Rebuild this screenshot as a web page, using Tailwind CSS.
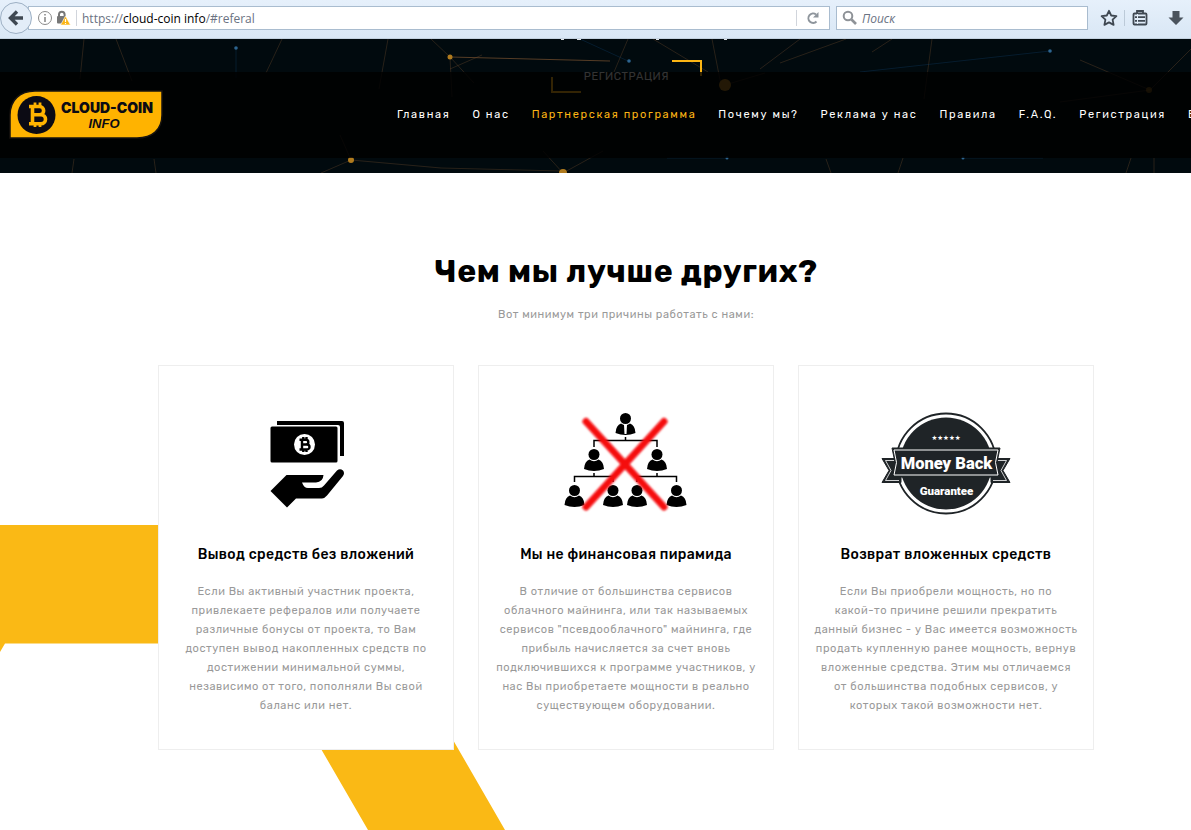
<!DOCTYPE html>
<html lang="ru">
<head>
    <meta charset="UTF-8">
    <meta name="viewport" content="width=device-width, initial-scale=1.0">
    <title>Cloud-Coin Info</title>
    <script src="https://cdn.jsdelivr.net/npm/@tailwindcss/browser@4"></script>
</head>
<body class="min-h-screen flex flex-col overflow-x-hidden bg-white font-['Rubik','Roboto',sans-serif]">
    <!-- Browser toolbar -->
    <div class="h-[39px] shrink-0 flex items-center pb-[2px] pr-[6px] bg-linear-to-b from-[#e6f0fb] to-[#d9e7f5] border-b border-[#c3d1df] font-['Open_Sans',sans-serif] text-xs text-gray-500">
        <button type="button" aria-label="Назад" class="relative z-10 size-8 shrink-0 flex items-center justify-center rounded-full border border-[#9db0c4] bg-[#e3edf8]">
            <svg class="size-4" viewBox="0 0 16 16" fill="none" stroke="#3f4852" stroke-width="3.400"><path d="M15 8H3M9 1.500L2.500 8L9 14.500"/></svg>
        </button>
        <div class="-ml-1 h-6 flex-1 min-w-0 flex items-center border border-[#a9bccf] bg-white">
            <svg class="ml-2 size-4 shrink-0" viewBox="0 0 16 16" fill="none" stroke="#8a8a8a"><circle cx="8" cy="8" r="6.500"/><path stroke-width="1.600" d="M8 7v5M8 4v1.600"/></svg>
            <svg class="ml-[2px] size-4 shrink-0" viewBox="0 0 16 16"><path d="M4 7V4.500a2.800 2.800 0 0 1 5.600 0V7" fill="none" stroke="#777" stroke-width="2"/><rect x="2" y="6" width="9" height="7.500" rx="1" fill="#777"/><path d="M10.500 6L15.500 15H5.500z" fill="#fcb514" stroke="#fff" stroke-width=".6"/><path d="M10.500 9v3M10.500 13v1" stroke="#fff" stroke-width="1.200"/></svg>
            <span class="mx-[5px] w-px h-4 bg-gray-300"></span>
            <div role="textbox" aria-label="Адрес" contenteditable="true" class="flex-1 pt-[2px] outline-none whitespace-nowrap">https://<span class="text-black">cloud-coin info</span>/#referal</div>
            <span class="w-px h-4 bg-gray-300"></span>
            <button type="button" aria-label="Обновить" class="w-8 h-full flex items-center justify-center">
                <svg class="size-[14px]" viewBox="0 0 14 14" fill="none" stroke="#8e959c" stroke-width="2"><path d="M10.500 10.500A4.700 4.700 0 1 1 10 3.500"/><path d="M12.500 1v5.500H7z" fill="#8e959c" stroke="none"/></svg>
            </button>
        </div>
        <label class="ml-[6px] h-6 w-[252px] shrink-0 flex items-center border border-[#a9bccf] bg-white">
            <svg class="ml-[5px] size-4 shrink-0" viewBox="0 0 16 16" fill="none" stroke="#8e9297" stroke-width="2"><circle cx="6" cy="6" r="4.300"/><path stroke-width="2.600" d="M9.500 9.500L14 14"/></svg>
            <input type="search" aria-label="Поиск" placeholder="Поиск" class="ml-1 pt-[2px] min-w-0 flex-1 outline-none italic placeholder:text-gray-500">
        </label>
        <button type="button" aria-label="Закладки" class="ml-3 shrink-0"><svg class="size-[18px]" viewBox="0 0 18 18" fill="none" stroke="#3f4852" stroke-width="1.800" stroke-linejoin="round"><path d="M9 1.800l2.200 4.700 5.200.7-3.800 3.500 1 5.200L9 13.400l-4.600 2.500 1-5.200L1.600 7.200l5.200-.7z"/></svg></button>
        <span class="ml-[6px] w-px h-4 shrink-0 bg-[#bccad8]"></span>
        <button type="button" aria-label="Список" class="ml-[6px] shrink-0"><svg class="size-[18px]" viewBox="0 0 18 18" fill="none" stroke="#3f4852" stroke-width="1.800"><rect x="2.500" y="4.500" width="13" height="11" rx="1"/><path d="M6 4V2h6v2M4 8.200h10M4 11.800h10"/><path d="M6.500 5v10" stroke="#e3edf8" stroke-width="1"/></svg></button>
        <button type="button" aria-label="Загрузки" class="ml-[18px] shrink-0"><svg class="size-[18px]" viewBox="0 0 18 18" fill="#4a535d"><path d="M5.500 2h7v6.500H16.500L9 16 1.500 8.500h4z"/></svg></button>
    </div>

    <!-- Hero -->
    <header class="relative h-[134px] shrink-0 overflow-hidden bg-[#010a0e]">
        <svg class="absolute inset-0 w-full h-full" viewBox="0 0 1191 134" preserveAspectRatio="xMinYMin slice" fill="none">
            <g stroke="#7a5230" stroke-opacity=".33">
                <path d="M84 0l-4 40M116 0l16 42M282 0l-16 34M388 0l-9 50M431 0l19 18 2 40M450 18l24 26M450 30l32-14M628 0l-14 33M653 0l55 33M712 0l9 46M780 24L846 0M872 13l20-13M932 0l-8 60M760 30l40-30M1150 51l-70-30M1150 51l41-41M1060 63l90-12M725 46l40-12M351 121l-11-25M351 121l-30 13M563 134l-20-22M563 134l40-22M826 120l5 14M903 119l-5 15M1131 119l-5 15M1154 119v15M74 120l-2 14M154 120l2 14"/>
                <path stroke-opacity=".7" d="M450 18l160 4"/>
                <path d="M351 121l90 8l120 3"/>
            </g>
            <path stroke="#12406a" stroke-opacity=".35" d="M1050 12L860 33M236 9v30M580 0l48 22M727 119l-60 0M963 119l80 0"/>
            <g fill="#b07b1e"><circle cx="450" cy="18" r="2.500"/><circle cx="725" cy="46" r="6"/><circle cx="351" cy="121" r="3"/><circle cx="563" cy="134" r="4"/><circle cx="1149" cy="51" r="3" fill-opacity=".6"/></g>
            <g fill="#2d6590"><circle cx="236" cy="9" r="1.800"/><circle cx="629" cy="22" r="1.800"/><circle cx="1050" cy="12" r="1.800"/><circle cx="727" cy="119" r="1.500"/><circle cx="963" cy="119" r="1.500"/></g>
            <path stroke="#dfe3e6" d="M561 .5h3M577 .5h4M656 .5h3M724 .5h3"/>
        </svg>
        <a href="#register" class="absolute top-[21px] left-[551px] w-[151px] h-[33px] flex items-center justify-center text-[11px] leading-none tracking-wider text-white">
            РЕГИСТРАЦИЯ
            <span class="absolute top-0 right-0 w-[30px] h-4 border-t-2 border-r-2 border-[#fcb514]"></span>
            <span class="absolute bottom-0 left-0 w-[30px] h-4 border-b-2 border-l-2 border-[#fcb514]"></span>
        </a>

        <!-- Menu bar -->
        <div class="relative mt-[33px] h-[86px] flex items-center bg-black/80">
            <a href="#top" aria-label="Cloud-Coin Info" class="w-[397px] shrink-0 pl-2">
                <svg class="w-[156px] h-[54px]" viewBox="0 0 156 54">
                    <path d="M2 50V27C2 12 12 3 27 3H154V27C154 42 144 50 129 50z" fill="#ffb300" stroke="#17130f" stroke-width="1.500"/>
                    <circle cx="28.500" cy="27" r="19" fill="#0c0b14"/>
                    <g fill="none" stroke="#ffb300" stroke-width="3.600"><path d="M21 18.500h10.500a4 4 0 0 1 0 8.300H24.500M24.500 26.800H33a4.500 4.500 0 0 1 0 9H21M24.500 18.500v17.300"/><path stroke-width="2.800" d="M27 14.500v4M32 14.500v4M27 35v4M32 35v4"/></g>
                    <text x="99" y="25" text-anchor="middle" font-family="Inter, sans-serif" font-weight="900" font-size="14" fill="#0c0b14">CLOUD-COIN</text>
                    <text x="96" y="40" text-anchor="middle" font-family="Liberation Sans, sans-serif" font-style="italic" font-weight="700" font-size="13" fill="#0c0b14">INFO</text>
                </svg>
            </a>
            <nav class="flex gap-[22px] text-[11px] leading-4 tracking-[0.15em] whitespace-nowrap text-white">
                <a href="#home">Главная</a>
                <a href="#about">О нас</a>
                <a href="#referal" class="text-[#fcb514]">Партнерская программа</a>
                <a href="#why">Почему мы?</a>
                <a href="#ads">Реклама у нас</a>
                <a href="#rules">Правила</a>
                <a href="#faq">F.A.Q.</a>
                <a href="#register">Регистрация</a>
                <a href="#login">Вход</a>
            </nav>
        </div>
    </header>

    <!-- Advantages -->
    <main class="relative flex-1 overflow-hidden pt-[78px] pl-[158px] pr-[97px] text-center">
        <svg class="absolute top-0 left-0 w-[505px] h-[657px]" viewBox="0 0 505 657"><path fill="#fab915" d="M0 352H329L505 657H368L260 470.500H5L0 479z"/></svg>

        <h1 class="text-[32px] leading-10 font-bold tracking-[0.02em] text-black">Чем мы лучше других?</h1>
        <p class="mt-[14px] text-[11px] leading-[19px] tracking-wider text-[#999]">Вот минимум три причины работать с нами:</p>

        <div class="relative mt-[41px] grid grid-cols-3 gap-6">
            <section class="h-[385px] pt-[34px] border border-[#eee] bg-white">
                <svg class="mx-auto w-[110px] h-[120px]" viewBox="0 0 110 120">
                    <path d="M26 21H91q2 0 2 2V56H89V27q0-2-2-2H26z"/>
                    <rect x="19.500" y="26.500" width="67" height="36" rx="1.500"/>
                    <circle cx="53.500" cy="44.500" r="10.500" fill="#fff"/>
                    <path fill="none" stroke="#000" stroke-width="2.400" d="M48.500 39.800h6.500a2.300 2.300 0 0 1 0 4.700H51M51 44.500h5a2.500 2.500 0 0 1 0 5H48.500M51 39.800v9.700M52.300 37v3M55.500 37v3M52.300 49v3M55.500 49v3"/>
                    <path d="M19.500 91L35.500 75H72.500Q72 82 65 82.500H51Q53 88 57 88H68Q71 88 73 85.500L86 70.500Q89 68 92 70.500Q94 73 92 76L76 95.500Q74 98 71 98.500H45L36 107.500z"/>
                </svg>
                <h2 class="mt-[25px] text-sm leading-5 font-medium tracking-wide text-black">Вывод средств без вложений</h2>
                <p class="mt-[17px] text-[11px] leading-[19px] tracking-wider whitespace-nowrap text-[#999]">Если Вы активный участник проекта,<br>привлекаете рефералов или получаете<br>различные бонусы от проекта, то Вам<br>доступен вывод накопленных средств по<br>достижении минимальной суммы,<br>независимо от того, пополняли Вы свой<br>баланс или нет.</p>
            </section>

            <section class="h-[385px] pt-[34px] border border-[#eee] bg-white">
                <svg class="mx-auto w-[145px] h-[120px]" viewBox="0 0 145 120">
                    <defs>
                        <g id="man"><circle cx="0" cy="5.500" r="5.500"/><path d="M-10 20Q-9.500 12-4.500 10.500Q0 14 4.500 10.500Q9.500 12 10 20Q0 24-10 20z"/></g>
                        <filter id="soft"><feGaussianBlur stdDeviation="0.800"/></filter>
                    </defs>
                    <path fill="none" stroke="#000" stroke-width="1.500" d="M71.500 37v3.500M40 47v-6.500H103V47M40 73v3.500M20.500 82v-5.500H59V82M103 73v3.500M83 82v-5.500H122.500V82"/>
                    <use href="#man" x="71.500" y="13"/><path d="M70 25h3l-.5 9h-2z" fill="#fff"/>
                    <use href="#man" x="40" y="49"/><use href="#man" x="103" y="49"/>
                    <use href="#man" x="20.500" y="85"/><use href="#man" x="59" y="85"/><use href="#man" x="83" y="85"/><use href="#man" x="122.500" y="85"/>
                    <path filter="url(#soft)" fill="none" stroke="#f5070b" stroke-width="7" stroke-linecap="round" d="M32 21.500L110 107M110 21.500L32 107"/>
                </svg>
                <h2 class="mt-[25px] text-sm leading-5 font-medium tracking-wide text-black">Мы не финансовая пирамида</h2>
                <p class="mt-[17px] text-[11px] leading-[19px] tracking-wider whitespace-nowrap text-[#999]">В отличие от большинства сервисов<br>облачного майнинга, или так называемых<br>сервисов "псевдооблачного" майнинга, где<br>прибыль начисляется за счет вновь<br>подключившихся к программе участников, у<br>нас Вы приобретаете мощности в реально<br>существующем оборудовании.</p>
            </section>

            <section class="h-[385px] pt-[34px] border border-[#eee] bg-white">
                <svg class="mx-auto w-[150px] h-[120px]" viewBox="0 0 150 120">
                    <g fill="#1f2427" stroke="#1f2427">
                        <circle cx="75" cy="63.500" r="50" fill="#fff" stroke-width="1.800"/>
                        <circle cx="75" cy="63.500" r="46" stroke="none"/>
                        <path d="M11 58.500H30V82.500H11L18 70.500zM139 58.500H120V82.500H139L132 70.500z"/>
                        <path fill="none" stroke="#fff" stroke-width=".8" d="M24 60.500H14.500L20 70.500L14.500 80.500H28M126 60.500H135.500L130 70.500L135.500 80.500H122"/>
                        <path d="M21 48H129L126 62.500L129 77H21L24 62.500z"/>
                        <path fill="none" stroke="#fff" stroke-width="1" d="M23 50H127L124.500 62.500L127 75H23L25.500 62.500z"/>
                    </g>
                    <text x="75" y="40" text-anchor="middle" font-family="DejaVu Sans, sans-serif" font-size="6.500" fill="#fff">★★★★★</text>
                    <text x="75.500" y="68.500" text-anchor="middle" font-family="Roboto, sans-serif" font-weight="900" font-size="16.500" fill="#fff">Money Back</text>
                    <text x="75.500" y="95" text-anchor="middle" font-family="Roboto, sans-serif" font-weight="900" font-size="11.500" fill="#fff">Guarantee</text>
                </svg>
                <h2 class="mt-[25px] text-sm leading-5 font-medium tracking-wide text-black">Возврат вложенных средств</h2>
                <p class="mt-[17px] text-[11px] leading-[19px] tracking-wider whitespace-nowrap text-[#999]">Если Вы приобрели мощность, но по<br>какой-то причине решили прекратить<br>данный бизнес - у Вас имеется возможность<br>продать купленную ранее мощность, вернув<br>вложенные средства. Этим мы отличаемся<br>от большинства подобных сервисов, у<br>которых такой возможности нет.</p>
            </section>
        </div>
    </main>
</body>
</html>
